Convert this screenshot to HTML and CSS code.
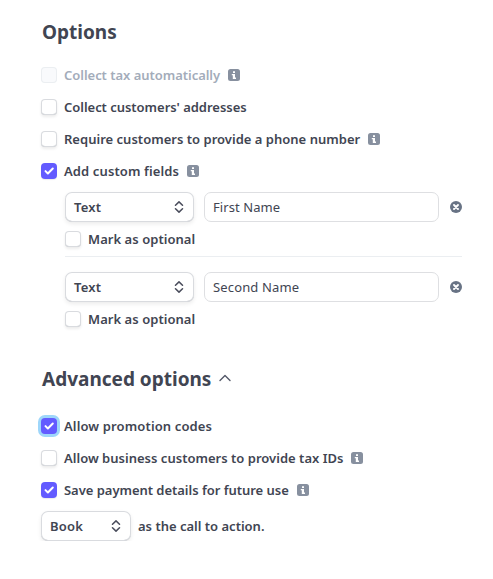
FILE: index.html
```html
<!DOCTYPE html>
<html lang="en">
<head>
<meta charset="utf-8">
<title>Options</title>
<link rel="stylesheet" href="styles.css">
</head>
<body>
<svg class="defs" aria-hidden="true">
  <symbol id="info" viewBox="0 0 12 12"><rect width="12" height="12" rx="2.5" fill="#87909f"/><path d="M5 2.2h2v1.7H5zM3.8 5H7v3.6h1v1.3H4.8V6.3h-1z" fill="#fff"/></symbol>
  <symbol id="check" viewBox="0 0 16 16"><path d="M4.5 8.1l2.4 2.4 4.9-5" fill="none" stroke="#fff" stroke-width="2" stroke-linecap="round" stroke-linejoin="round"/></symbol>
  <symbol id="sort" viewBox="0 0 10 12"><path d="M1.5 4.3L5 .9l3.5 3.4M1.5 7.7L5 11.1l3.5-3.4" fill="none" stroke="#4a4d5c" stroke-width="1.5" stroke-linecap="round" stroke-linejoin="round"/></symbol>
  <symbol id="remove" viewBox="0 0 12 12"><circle cx="6" cy="6" r="6" fill="#687385"/><path d="M4 4l4 4M8 4L4 8" stroke="#fff" stroke-width="1.9" stroke-linecap="round"/></symbol>
</svg>
<main>
  <h2><span>Options</span></h2>
  <div class="row disabled"><span class="box"></span><span class="label t-tax">Collect tax automatically</span><svg class="info"><use href="#info"/></svg></div>
  <div class="row"><span class="box"></span><span class="label t-address">Collect customers' addresses</span></div>
  <div class="row"><span class="box"></span><span class="label t-phone">Require customers to provide a phone number</span><svg class="info"><use href="#info"/></svg></div>
  <div class="row"><span class="box checked"><svg><use href="#check"/></svg></span><span class="label t-custom">Add custom fields</span><svg class="info"><use href="#info"/></svg></div>
  <section class="fields">
    <div class="field">
      <div class="controls"><div class="select"><span class="t-text">Text</span><svg><use href="#sort"/></svg></div><div class="input"><span class="t-first">First Name</span></div><svg class="remove"><use href="#remove"/></svg></div>
      <div class="row"><span class="box"></span><span class="label t-mark">Mark as optional</span></div>
    </div>
    <div class="field">
      <div class="controls"><div class="select"><span class="t-text">Text</span><svg><use href="#sort"/></svg></div><div class="input"><span class="t-second">Second Name</span></div><svg class="remove"><use href="#remove"/></svg></div>
      <div class="row"><span class="box"></span><span class="label t-mark">Mark as optional</span></div>
    </div>
  </section>
  <h2 class="advanced"><span>Advanced options</span><svg viewBox="0 0 12 8"><path d="M1 6.5L6 1.5l5 5" fill="none" stroke="#545969" stroke-width="1.4" stroke-linecap="round" stroke-linejoin="round"/></svg></h2>
  <div class="row"><span class="box checked focused"><svg><use href="#check"/></svg></span><span class="label t-promo">Allow promotion codes</span></div>
  <div class="row"><span class="box"></span><span class="label t-ids">Allow business customers to provide tax IDs</span><svg class="info"><use href="#info"/></svg></div>
  <div class="row"><span class="box checked"><svg><use href="#check"/></svg></span><span class="label t-save">Save payment details for future use</span><svg class="info"><use href="#info"/></svg></div>
  <div class="cta"><div class="select"><span class="t-book">Book</span><svg><use href="#sort"/></svg></div><span class="label">as the call to action.</span></div>
</main>
</body>
</html>
```
FILE: styles.css
```css
* { box-sizing: border-box; }
body { margin: 0; background: #fff; color: #414552; font: 600 13px/20px "Noto Sans", sans-serif; }
.defs { position: absolute; width: 0; height: 0; }
main { width: 462px; padding: 17px 0 0 41px; }
span { white-space: nowrap; }
svg { display: block; flex: none; }
h2 { display: flex; align-items: center; height: 30px; margin: 0 0 12px 1px; font-size: 19px; line-height: 30px; font-weight: 700; }
.row { display: flex; align-items: center; height: 32px; }
.box { width: 16px; height: 16px; margin-right: 7px; flex: none; border-radius: 4px; background: #fff; box-shadow: 0 0 0 1px #d9dbdf inset, 0 -1px 0 #bfc1c5 inset, 0 2px 3px #00000014; }
.checked { background: #635bff; box-shadow: 0 1px 1px #00000014; }
.box svg { width: 16px; height: 16px; }
.focused { box-shadow: 0 0 0 3px #9ed6fa; }
.disabled { color: #a3acba; }
.disabled .box { background: #f9fafc; box-shadow: 0 0 0 1px #ebeef1 inset; }
.info { width: 12px; height: 12px; margin-left: 8px; }
.fields { margin: 5px 0 0 24px; }
.field { height: 64px; }
.field + .field { border-top: 1px solid #ebeef1; padding-top: 15px; height: 80px; }
.controls { display: flex; align-items: center; height: 30px; }
.select { display: flex; flex: none; align-items: center; justify-content: space-between; width: 129px; height: 30px; padding: 0 10px 0 9px; border-radius: 7px; background: #fff; box-shadow: 0 0 0 1px #d9dbdf inset, 0 -1px 0 #bfc1c5 inset, 0 2px 4px #00000014; }
.select svg { width: 10px; height: 12px; }
.input { flex: none; width: 235px; height: 30px; margin-left: 10px; padding: 4px 8px; border: 1px solid #dedfe2; border-radius: 7px; font-weight: 400; }
.remove { width: 12px; height: 12px; margin-left: 11px; }
.field .row { margin-top: 1px; }
.advanced { margin-top: 28px; margin-bottom: 16px; }
.advanced svg { width: 12px; height: 8px; margin: 0 0 2px 8px; }
.cta { display: flex; align-items: center; margin-top: 5px; }
.cta .select { width: 90px; margin-right: 7px; }
.t-tax, .t-address, .t-save { letter-spacing: -.03px; }
.t-phone, .t-ids { letter-spacing: .015px; }
.t-custom { letter-spacing: .12px; }
.t-mark { letter-spacing: .05px; }
.t-first { letter-spacing: .08px; }
.t-second { letter-spacing: .15px; }
.t-promo { letter-spacing: .13px; }
.t-text, .t-book { letter-spacing: .25px; }
```
